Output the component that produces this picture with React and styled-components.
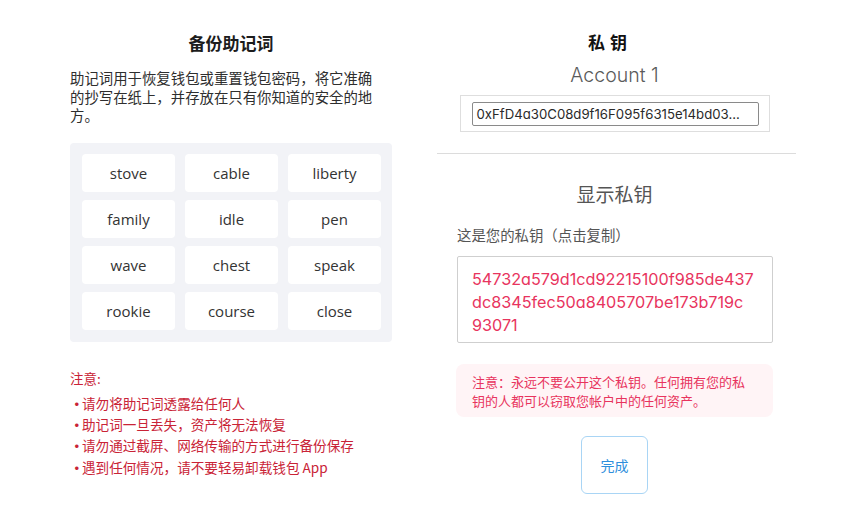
import React from "react";
import styled, { createGlobalStyle } from "styled-components";

const Global = createGlobalStyle`
  html, body { margin: 0; padding: 0; background: #ffffff; }
  body { font-family: "Noto Sans CJK SC", "Noto Sans", sans-serif; }
  * { box-sizing: border-box; }
`;

const CJK = `"Noto Sans CJK SC", sans-serif`;
const GEO = `Inter, "Noto Sans CJK SC", sans-serif`;

const Page = styled.div`
  width: 846px;
  height: 522px;
  display: flex;
  align-items: flex-start;
  padding-left: 70px;
  gap: 41px;
  overflow: hidden;
`;

const LeftCol = styled.section`
  width: 322px;
  display: flex;
  flex-direction: column;
`;

const Title = styled.h1`
  margin: 31px 0 0;
  font-family: ${CJK};
  font-size: 17px;
  line-height: 24px;
  font-weight: 700;
  color: #1c1c1c;
  text-align: center;
`;

const Desc = styled.p`
  margin: 14px 0 0;
  width: 310px;
  font-family: ${CJK};
  font-size: 14.4px;
  line-height: 18.5px;
  color: #2e2e2e;
`;

const WordGrid = styled.div`
  margin-top: 18px;
  background: #f2f3f7;
  border-radius: 4px;
  padding: 11px 11px 12px 12px;
  display: grid;
  grid-template-columns: repeat(3, 93px);
  grid-auto-rows: 38px;
  column-gap: 10px;
  row-gap: 8px;
`;

const Word = styled.div`
  background: #ffffff;
  border-radius: 4px;
  display: flex;
  align-items: center;
  justify-content: center;
  font-family: "Open Sans", "Noto Sans", sans-serif;
  font-size: 15px;
  color: #333;
`;

const NoteTitle = styled.div`
  margin-top: 26px;
  font-family: ${CJK};
  font-size: 13.5px;
  line-height: 20px;
  color: #c92336;
`;

const NoteList = styled.ul`
  margin: 5px 0 0;
  padding: 0;
  list-style: none;
  display: flex;
  flex-direction: column;
`;

const NoteItem = styled.li`
  position: relative;
  padding-left: 12px;
  font-family: ${CJK};
  font-size: 13.6px;
  line-height: 21.4px;
  color: #c92336;
  &::before {
    content: "·";
    position: absolute;
    left: 0;
    top: 0;
    font-weight: 700;
  }
`;

const RightCol = styled.section`
  width: 363px;
  display: flex;
  flex-direction: column;
  align-items: center;
`;

const KeyTitle = styled.h1`
  margin: 32px 14px 0 0;
  font-family: "Liberation Serif", "Noto Sans CJK SC", serif;
  font-size: 17px;
  line-height: 24px;
  font-weight: 700;
  letter-spacing: 5px;
  padding-left: 5px;
  color: #111;
`;

const AccountName = styled.div`
  margin-top: 6px;
  font-family: ${GEO};
  font-feature-settings: "cv11";
  font-size: 19.5px;
  line-height: 26px;
  font-weight: 300;
  color: #5a5a5a;
`;

const AddressBox = styled.div`
  margin: 7px 0 0 1px;
  width: 310px;
  height: 37px;
  border: 1px solid #dedede;
  display: flex;
  align-items: center;
  justify-content: center;
`;

const AddressInput = styled.div`
  width: 287px;
  height: 24px;
  border: 1px solid #8a8a8a;
  border-radius: 2px;
  padding: 0 4px;
  font-family: ${GEO};
  font-feature-settings: "cv11";
  font-size: 13.2px;
  line-height: 22px;
  color: #2a2a2a;
  white-space: nowrap;
  overflow: hidden;
`;

const Divider = styled.hr`
  align-self: stretch;
  margin: 21px 0 0 4px;
  border: none;
  border-top: 1px solid #dcdcdc;
  height: 0;
`;

const SubTitle = styled.h2`
  margin: 26px 0 0;
  font-family: ${CJK};
  font-size: 19px;
  line-height: 28px;
  font-weight: 400;
  color: #555;
`;

const KeyLabel = styled.div`
  align-self: stretch;
  margin: 17px 0 0 24px;
  font-family: ${CJK};
  font-size: 14.4px;
  line-height: 20px;
  color: #555;
`;

const KeyBox = styled.div`
  align-self: stretch;
  margin: 11px 23px 0 24px;
  height: 87px;
  border: 1px solid #cfcfcf;
  border-radius: 2px;
  padding: 11px 8px 0 14px;
  font-family: ${GEO};
  font-feature-settings: "cv11";
  font-size: 16.2px;
  line-height: 23px;
  color: #e8345e;
`;

const KeyLine = styled.span`
  display: block;
  white-space: nowrap;
`;

const Warning = styled.div`
  align-self: stretch;
  margin: 21px 23px 0 23px;
  background: #fff4f6;
  border-radius: 8px;
  padding: 8px 22px 7px 16px;
  font-family: ${CJK};
  font-size: 13px;
  line-height: 19px;
  color: #e8345e;
`;

const DoneButton = styled.button`
  margin-top: 19px;
  width: 67px;
  height: 58px;
  border: 1px solid #a9d5f5;
  border-radius: 6px;
  background: #fff;
  font-family: ${CJK};
  font-size: 14px;
  color: #2f8fdc;
  cursor: pointer;
`;

const words = [
  "stove", "cable", "liberty",
  "family", "idle", "pen",
  "wave", "chest", "speak",
  "rookie", "course", "close",
];

const notes = [
  "请勿将助记词透露给任何人",
  "助记词一旦丢失，资产将无法恢复",
  "请勿通过截屏、网络传输的方式进行备份保存",
  "遇到任何情况，请不要轻易卸载钱包 App",
];

const privateKey = "54732a579d1cd92215100f985de437dc8345fec50a8405707be173b719c93071";
const keyLines = [privateKey.slice(0, 30), privateKey.slice(30, 59), privateKey.slice(59)];

export default function App() {
  return (
    <>
      <Global />
      <Page>
        <LeftCol>
          <Title>备份助记词</Title>
          <Desc>
            助记词用于恢复钱包或重置钱包密码，将它准确的抄写在纸上，并存放在只有你知道的安全的地方。
          </Desc>
          <WordGrid>
            {words.map((w) => (
              <Word key={w}>{w}</Word>
            ))}
          </WordGrid>
          <NoteTitle>注意:</NoteTitle>
          <NoteList>
            {notes.map((n) => (
              <NoteItem key={n}>{n}</NoteItem>
            ))}
          </NoteList>
        </LeftCol>
        <RightCol>
          <KeyTitle>私钥</KeyTitle>
          <AccountName>Account 1</AccountName>
          <AddressBox>
            <AddressInput>0xFfD4a30C08d9f16F095f6315e14bd03...</AddressInput>
          </AddressBox>
          <Divider />
          <SubTitle>显示私钥</SubTitle>
          <KeyLabel>这是您的私钥（点击复制）</KeyLabel>
          <KeyBox>
            {keyLines.map((l) => (
              <KeyLine key={l}>{l}</KeyLine>
            ))}
          </KeyBox>
          <Warning>
            注意：永远不要公开这个私钥。任何拥有您的私钥的人都可以窃取您帐户中的任何资产。
          </Warning>
          <DoneButton>完成</DoneButton>
        </RightCol>
      </Page>
    </>
  );
}
